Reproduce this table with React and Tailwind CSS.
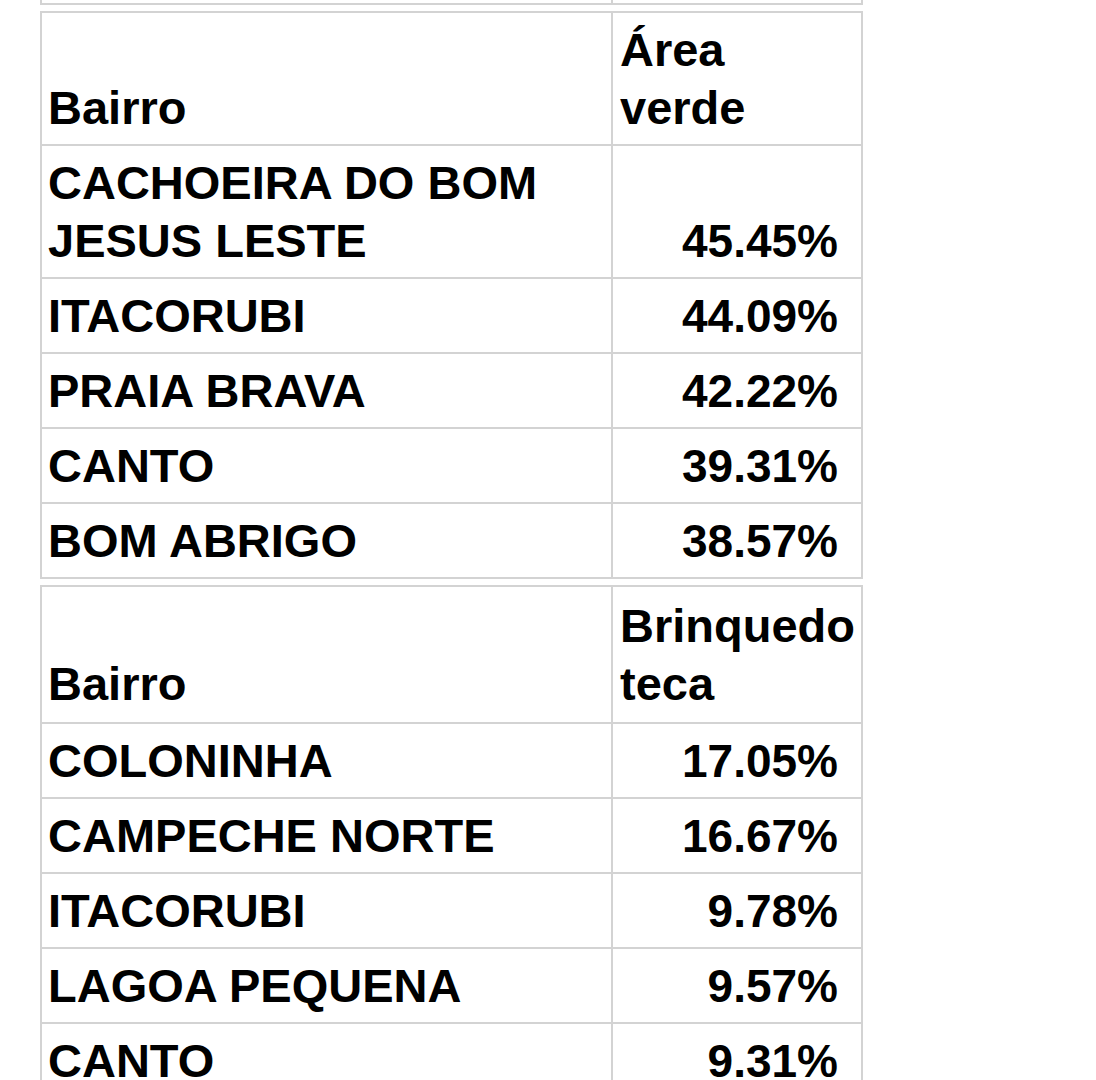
import React from "react";

const font = { fontFamily: '"Liberation Sans", Arial, sans-serif' };

function Table({ header, rows, headerExtra = false }) {
  return (
    <table className="w-[821px] border-collapse table-fixed text-black font-bold text-[47px] leading-[58px]" style={font}>
      <colgroup>
        <col className="w-[571px]" />
        <col className="w-[250px]" />
      </colgroup>
      <tbody>
        <tr>
          <td className={`border-2 border-[#d3d3d3] align-bottom pl-[6px] ${headerExtra ? "pt-[10px] pb-[9px]" : "pt-[8px] pb-[7px]"}`}>Bairro</td>
          <td className={`border-2 border-[#d3d3d3] align-bottom pl-[7px] pr-[2px] ${headerExtra ? "pt-[10px] pb-[9px]" : "pt-[8px] pb-[7px]"}`}>
            {header[0]}
            <br />
            {header[1]}
          </td>
        </tr>
        {rows.map(([name, val], i) => (
          <tr key={i}>
            <td className="border-2 border-[#d3d3d3] align-bottom pl-[6px] pt-[8px] pb-[7px]">{name}</td>
            <td className="border-2 border-[#d3d3d3] align-bottom text-right text-[46px] pr-[23px] pt-[8px] pb-[7px]">{val}</td>
          </tr>
        ))}
      </tbody>
    </table>
  );
}

export default function App() {
  return (
    <div className="w-[1096px] h-[1080px] bg-white overflow-hidden pl-[40px]">
      <table className="w-[821px] border-collapse table-fixed">
        <colgroup>
          <col className="w-[571px]" />
          <col className="w-[250px]" />
        </colgroup>
        <tbody>
          <tr>
            <td className="h-[4px] border-2 border-t-0 border-[#d3d3d3] p-0"></td>
            <td className="h-[4px] border-2 border-t-0 border-[#d3d3d3] p-0"></td>
          </tr>
        </tbody>
      </table>
      <div className="h-[6px]" />
      <Table
        header={["Área", "verde"]}
        rows={[
          [<>CACHOEIRA DO BOM<br />JESUS LESTE</>, "45.45%"],
          ["ITACORUBI", "44.09%"],
          ["PRAIA BRAVA", "42.22%"],
          ["CANTO", "39.31%"],
          ["BOM ABRIGO", "38.57%"],
        ]}
      />
      <div className="h-[6px]" />
      <Table
        headerExtra
        header={["Brinquedo", "teca"]}
        rows={[
          ["COLONINHA", "17.05%"],
          ["CAMPECHE NORTE", "16.67%"],
          ["ITACORUBI", "9.78%"],
          ["LAGOA PEQUENA", "9.57%"],
          ["CANTO", "9.31%"],
        ]}
      />
    </div>
  );
}
